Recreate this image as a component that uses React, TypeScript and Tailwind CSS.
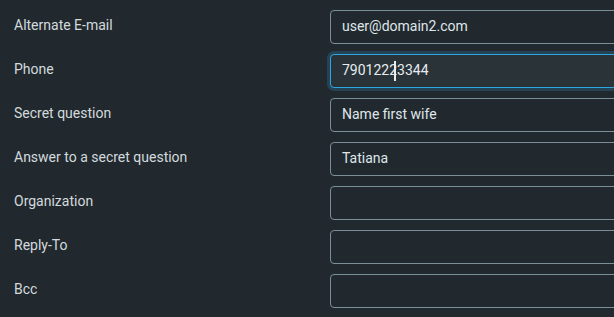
const rows = [
  { label: "Alternate E-mail", value: "user@domain2.com" },
  { label: "Phone", value: "79012223344", focused: true },
  { label: "Secret question", value: "Name first wife" },
  { label: "Answer to a secret question", value: "Tatiana" },
  { label: "Organization", value: "" },
  { label: "Reply-To", value: "" },
  { label: "Bcc", value: "" },
];

function Field({ value, focused }: { value: string; focused?: boolean }) {
  if (focused) {
    return (
      <div className="flex h-[34px] w-[300px] shrink-0 items-center rounded-[4px] border border-[#2ea7e0] bg-[#2a3338] pb-[2px] pl-[11px] text-[14px] text-[#e6ecef] shadow-[0_0_0_3px_rgba(40,120,160,0.35)]">
        <span>{value.slice(0, 7)}</span>
        <span className="-ml-[3px] mr-[1px] mt-[2px] h-[20px] w-[2px] bg-[#e8eef0]" />
        <span>{value.slice(7)}</span>
      </div>
    );
  }
  return (
    <div className="flex h-[34px] w-[300px] shrink-0 items-center rounded-[4px] border border-[#7a8f96] bg-[#22292e] pb-[2px] pl-[11px] text-[14px] text-[#dfe6ea]">
      {value}
    </div>
  );
}

export default function App() {
  return (
    <div className="h-[317px] w-[614px] overflow-hidden bg-[#22292e] pt-[10px] font-['Roboto',sans-serif]">
      <div className="flex flex-col gap-[10px]">
        {rows.map((row) => (
          <div key={row.label} className="flex items-center">
            <div className="w-[330px] shrink-0 pb-[4px] pl-[14px] text-[14px] text-[#d2dade]">{row.label}</div>
            <Field value={row.value} focused={row.focused} />
          </div>
        ))}
      </div>
    </div>
  );
}
